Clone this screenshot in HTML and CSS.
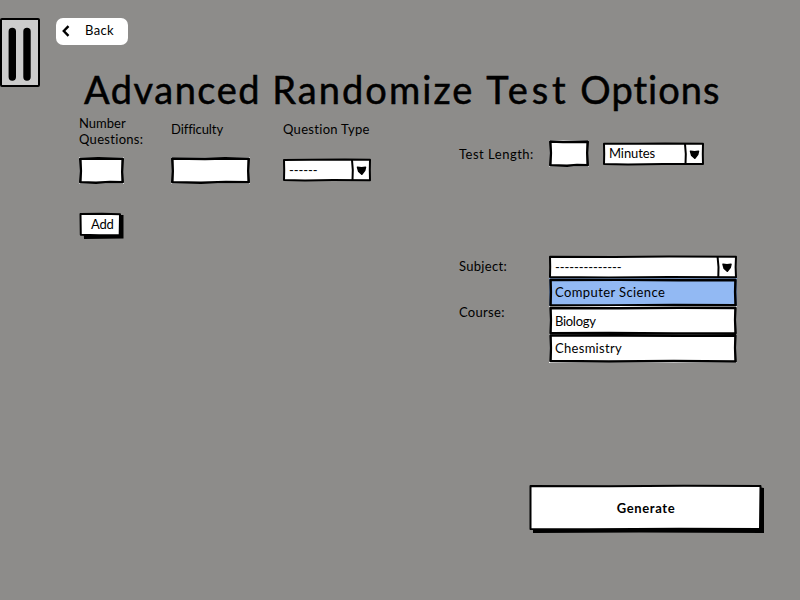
FILE: index.html
```html
<!DOCTYPE html>
<html lang="en">
<head>
<meta charset="utf-8">
<title>Advanced Randomize Test Options</title>
<link rel="stylesheet" href="styles.css">
</head>
<body>
<div class="page">
  <button class="drawer" aria-label="Menu">
    <svg width="40" height="69" viewBox="0 0 40 69"><rect x="1" y="1" width="38" height="67" rx="1" fill="#ccc" stroke="#000" stroke-width="2"/><path d="M12.3 13.5V59M27 13.5V59" stroke="#000" stroke-width="7.4" stroke-linecap="round"/></svg>
  </button>
  <main class="main">
    <button class="back">
      <svg width="8" height="12" viewBox="0 0 8 12"><path d="M6.5 1.2L1.8 6l4.7 4.8" fill="none" stroke="#000" stroke-width="2.4"/></svg>
      <span>Back</span>
    </button>
    <h1 class="title"><span class="t-advanced">Advanced </span><span class="t-randomize">Randomize </span><span class="t-test">Test </span><span class="t-options">Options</span></h1>
    <div class="columns">
      <section class="questions">
        <div class="fields">
          <label><span class="w-number">Number</span><br><span>Questions:</span></label>
          <label class="single w-difficulty">Difficulty</label>
          <label class="single">Question Type</label>
          <div class="box number">
            <svg class="frame" viewBox="0 0 45 27"><path fill="#fff" d="M0 0H45V27H0z"/><path class="line heavy" d="M1.3 1.8L19 1.4 43.7 1.7 43.3 15 43.7 25.2 31 25 17 25.7 1.3 25.2 1.8 14z"/></svg>
          </div>
          <div class="box difficulty">
            <svg class="frame" viewBox="0 0 79 27"><path fill="#fff" d="M0 0H79V27H0z"/><path class="line heavy" d="M1.3 1.5L34 1.9 54 1.4 77.7 1.7 77.3 14 77.7 25.2 55 25 30 25.7 1.3 25.2 1.7 14z"/></svg>
          </div>
          <div class="box select type">
            <svg class="frame" viewBox="0 0 88 24"><path class="line fill" d="M1 1.9L28 1.7 62 1.4 87 1.8 86.8 12 87 22.2 50 22 22 22.4 1 22 1.2 12z"/><path class="line" d="M69 2L69.8 12 69.5 22"/><path class="arrow" transform="translate(78.5 12.5)" d="M-4 -3.3L0 -2.8 4 -3.3 3.2 0 0.3 3.8 -2.8 1z"/></svg>
            <span class="dashes">------</span>
          </div>
        </div>
        <button class="box add">
          <svg class="frame" viewBox="0 0 45 27"><path d="M4 5L42 3H44.5V26.5L5 27z"/><path class="line fill" d="M1.5 2L23 1.8 41 2.2 40.7 23 20 23.2 1.8 22.8z"/></svg>
          <span>Add</span>
        </button>
      </section>
      <section class="settings">
        <div class="row length">
          <label>Test Length:</label>
          <div class="box duration">
            <svg class="frame" viewBox="0 0 40 27"><path fill="#fff" d="M0 0H40V27H0z"/><path class="line heavy" d="M1.3 1.5L14 2 38.7 1.6 38.3 13 38.7 25.2 28 25 18 25.7 1.3 25.2 1.8 13z"/></svg>
          </div>
          <div class="box select unit">
            <svg class="frame" viewBox="0 0 101 24"><path class="line fill" d="M1 1.8L35 1.8 62 1.4 100 1.7 99.8 12 100 22 60 22 25 22.4 1 22 1.2 12z"/><path class="line" d="M82 2L82.8 12 82.5 22"/><path class="arrow" transform="translate(91.5 12.5)" d="M-4 -3.3L0 -2.8 4 -3.3 3.2 0 0.3 3.8 -2.8 1z"/></svg>
            <span>Minutes</span>
          </div>
        </div>
        <div class="choices">
          <div class="labels">
            <label>Subject:</label>
            <label>Course:</label>
          </div>
          <div class="dropdown">
            <div class="box select subject">
              <svg class="frame" viewBox="0 0 188 24"><path class="line fill" d="M1 1.7L65 1.9 120 1.4 187 1.8 186.6 12 187 22.3 120 22 60 22.4 1 22 1.2 12z"/><path class="line" d="M168.6 2L169.5 12 169.3 22"/><path class="arrow" transform="translate(178 12.5)" d="M-4 -3.3L0 -2.8 4 -3.3 3.2 0 0.3 3.8 -2.8 1z"/></svg>
              <span class="dashes">--------------</span>
            </div>
            <ul class="options">
              <li class="box">
                <svg class="frame" viewBox="0 0 188 29"><path class="tint" d="M0 0H188V29H0z"/><path class="line heavy" d="M1.5 1.9L70 1.7 130 2.1 186.5 1.9 186.2 14 186.6 27.3 125 27 60 27.5 1.5 27.3 1.8 14z"/></svg>
                <span class="w-cs">Computer Science</span>
              </li>
              <li class="box">
                <svg class="frame" viewBox="0 0 188 29"><path fill="#fff" d="M0 0H188V29H0z"/><path class="line heavy" d="M1.5 1.9L70 2.2 130 1.7 186.5 1.9 186.2 14 186.6 27.3 125 27.5 60 27.1 1.5 27.3 1.8 14z"/></svg>
                <span class="w-bio">Biology</span>
              </li>
              <li class="box">
                <svg class="frame" viewBox="0 0 188 29"><path fill="#fff" d="M0 1H188V29H0z"/><path class="line heavy" d="M1.5 1.5L70 1.4 130 1.7 186.5 1.4 186.2 14 186.6 27.5 125 27 60 27.5 1.5 27 1.8 14z"/></svg>
                <span class="w-chem">Chesmistry</span>
              </li>
            </ul>
          </div>
        </div>
        <button class="box generate">
          <svg class="frame" viewBox="0 0 236 50"><path d="M4 4L232 3.5 235 4V49L110 48.5 4 49z"/><path class="line fill" d="M1.5 2L80 2.2 155 1.8 231.5 2.1 231 45 150 44.8 60 45.2 1.5 45z"/></svg>
          <span>Generate</span>
        </button>
      </section>
    </div>
  </main>
</div>
</body>
</html>
```
FILE: styles.css
```css
* { box-sizing: border-box; }
body {
  margin: 0;
  background: #8d8c8a;
  color: #000;
  font: 13px/16px Lato, "Open Sans", sans-serif;
}
button {
  border: 0;
  padding: 0;
  background: none;
  color: inherit;
  font: inherit;
}
svg { display: block; }
.page { display: flex; width: 800px; height: 600px; overflow: hidden; }
.drawer { flex: none; align-self: flex-start; width: 40px; height: 69px; margin-top: 18px; }
.main { flex: 1; padding-top: 18px; white-space: nowrap; }
.back {
  display: flex;
  align-items: center;
  gap: 15px;
  width: 72px;
  height: 27px;
  margin-left: 16px;
  padding: 0 0 1px 6px;
  border-radius: 7px;
  background: #fff;
  letter-spacing: 0.35px;
}
.back span { padding-bottom: 2px; }
.title {
  margin: 20px 0 0 44px;
  height: 48px;
  font-size: 38px;
  line-height: 48px;
  font-weight: 400;
  -webkit-text-stroke: 0.5px #000;
}
.t-advanced { letter-spacing: 1.5px; }
.t-randomize { letter-spacing: 2.05px; }
.t-test { letter-spacing: 3.8px; word-spacing: -2.5px; }
.t-options { letter-spacing: 1px; }
.columns { display: flex; padding-left: 39px; }
.questions { width: 380px; padding-top: 2px; }
.fields {
  display: grid;
  grid-template-columns: 92px 112px 88px;
  grid-template-rows: 32px 27px;
  row-gap: 10px;
  align-items: center;
}
label, .box span { letter-spacing: 0.3px; }
.w-number { letter-spacing: 0; }
.w-difficulty { letter-spacing: -0.1px; }
.single { padding-bottom: 4px; }
.box { position: relative; display: flex; align-items: center; }
.frame { position: absolute; inset: 0; width: 100%; height: 100%; }
.box span { position: relative; padding-left: 6px; }
.line { fill: none; stroke: #000; stroke-width: 2; stroke-linejoin: round; }
.line.fill { fill: #fff; }
.line.heavy { stroke-width: 2.6; }
.arrow { stroke: #000; stroke-width: 1.5; stroke-linejoin: round; }
.tint { fill: #92b9f3; }
.number { width: 45px; height: 27px; }
.difficulty { width: 79px; height: 27px; }
.type { width: 88px; height: 24px; margin-bottom: 2px; }
.box .dashes { letter-spacing: -0.08px; }
.add { width: 45px; height: 27px; margin-top: 28px; padding-bottom: 3px; }
.box.add span { padding-left: 12px; letter-spacing: -0.2px; }
.settings { width: 306px; padding-top: 27px; }
.row { display: flex; align-items: center; }
.length label { width: 90px; letter-spacing: 0.5px; }
.duration { width: 40px; height: 27px; margin-right: 14px; }
.unit { width: 101px; height: 24px; padding-bottom: 1px; }
.box.unit span { letter-spacing: -0.1px; }
.choices { display: flex; margin-top: 88px; }
.labels { display: flex; flex-direction: column; gap: 30px; width: 90px; padding-top: 3px; }
.subject { width: 188px; height: 24px; }
.options { margin: -1px 0 0; padding: 0; list-style: none; }
.options .box { width: 188px; height: 29px; padding-bottom: 1px; }
.options .box + .box { margin-top: -1px; }
.box .w-cs { letter-spacing: 0.4px; }
.box .w-bio { letter-spacing: -0.3px; padding-top: 2px; }
.box .w-chem { padding-bottom: 1px; }
.generate { justify-content: center; width: 236px; height: 50px; margin: 121px 0 0 70px; padding: 0 2px 3px 0; font-weight: 700; }
.box.generate span { padding: 0; letter-spacing: 0.6px; }
```
